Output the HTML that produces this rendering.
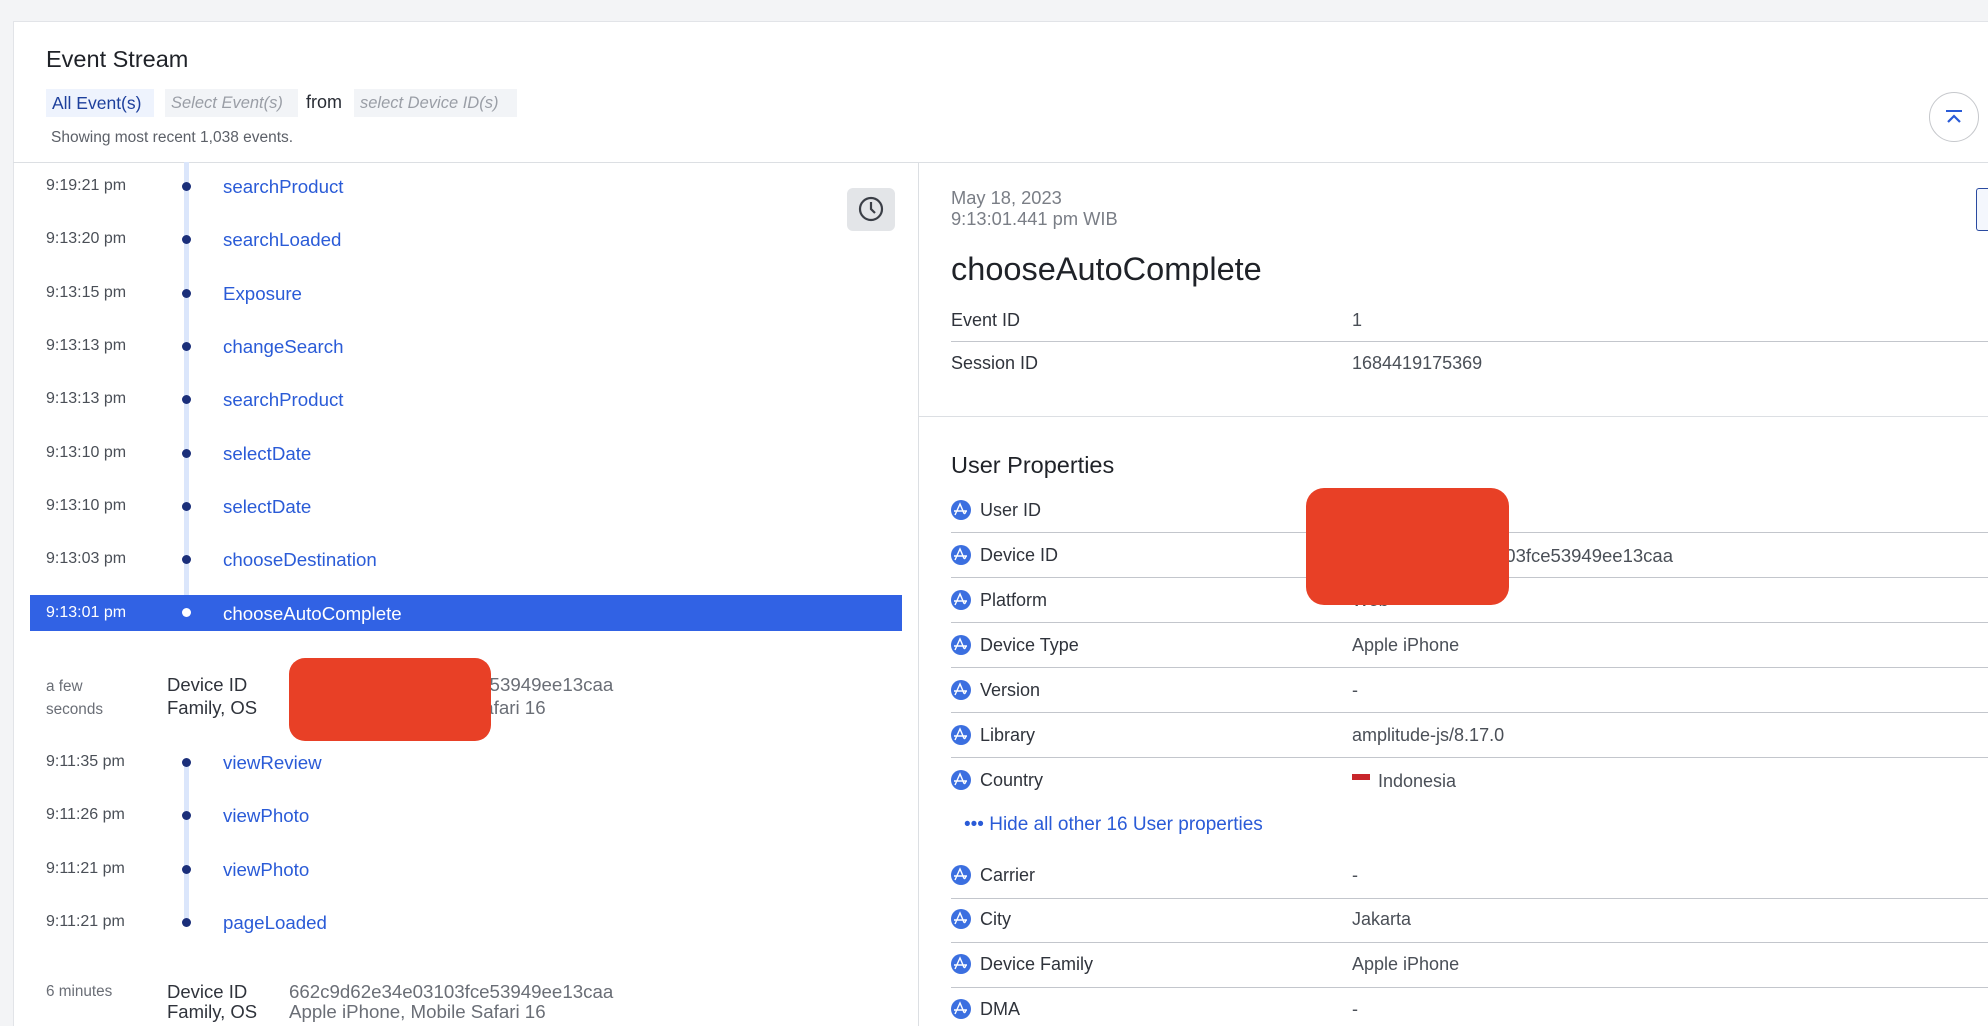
<!DOCTYPE html>
<html><head><meta charset="utf-8"><style>
*{margin:0;padding:0;box-sizing:border-box}
html,body{width:1988px;height:1026px;overflow:hidden}
body{background:#f3f4f6;font-family:"Liberation Sans",sans-serif;position:relative;color:#282c34}
.card{position:absolute;left:13px;top:21px;width:1975px;height:1005px;background:#fff;border:1px solid #e2e4e8;border-bottom:none;border-right:none}
.a{position:absolute;white-space:nowrap}
.t{position:absolute;left:46px;font-size:16px;color:#4a4f57}
.dot{position:absolute;left:182px;width:9px;height:9px;border-radius:50%;background:#1b2f7a}
.ev{position:absolute;left:223px;font-size:18.7px;color:#2a5bd7}
.lbl{position:absolute;left:980px;font-size:18px;color:#2f333b}
.val{position:absolute;left:1352px;font-size:18px;color:#4a4f57}
.ic{position:absolute;left:951px;width:20px;height:20px}
.ln{position:absolute;left:951px;width:1037px;height:1px;background:#c3c6cc}
</style></head><body>
<svg width="0" height="0" style="position:absolute"><defs><symbol id="amp" viewBox="0 0 20 20"><circle cx="10" cy="10" r="10" fill="#3b6fe0"/><path d="M4 15 L9 4 L12 11 M3 11 H16 M12 11 Q13.5 16 15 11" stroke="#fff" stroke-width="1.4" fill="none"/></symbol></defs></svg>
<div class="card"></div>
<div class="a" style="left:46px;top:46px;font-size:23.5px;color:#1f2228">Event Stream</div>
<div class="a" style="left:46px;top:89px;height:28px;width:108px;background:#eef3fd;color:#1d3f9c;font-size:17.5px;padding:4px 6px">All Event(s)</div>
<div class="a" style="left:165px;top:89px;height:28px;width:133px;background:#f2f4f7;color:#9a9ea6;font-size:16.5px;font-style:italic;padding:5px 6px">Select Event(s)</div>
<div class="a" style="left:306px;top:92px;font-size:18px;color:#282c34">from</div>
<div class="a" style="left:354px;top:89px;height:28px;width:163px;background:#f2f4f7;color:#9a9ea6;font-size:16.5px;font-style:italic;padding:5px 6px">select Device ID(s)</div>
<div class="a" style="left:51px;top:129px;font-size:15.5px;color:#5c6068">Showing most recent 1,038 events.</div>
<div class="a" style="left:13px;top:162px;width:1975px;height:1px;background:#dcdfe3"></div>
<div class="a" style="left:918px;top:162px;width:1px;height:864px;background:#dcdfe3"></div>
<div class="a" style="left:1929px;top:92px;width:50px;height:50px;border-radius:50%;border:1px solid #c6c8cc"></div>
<div class="a" style="left:1946px;top:110px;width:16px;height:2px;background:#2a5bd7"></div>
<svg class="a" style="left:1946px;top:114px" width="16" height="10"><path d="M2 8 L8 2 L14 8" stroke="#2a5bd7" stroke-width="2.2" fill="none"/></svg>
<div class="a" style="left:1976px;top:188px;width:12px;height:43px;border:1.5px solid #2a4aa0;border-right:none;border-radius:3px 0 0 3px;background:#f4f7fd"></div>

<div class="a" style="left:184px;top:162px;width:5px;height:455px;background:#dbe6fb"></div>
<div class="a" style="left:30px;top:595px;width:872px;height:36px;background:#3162e4"></div>
<div class="a" style="left:847px;top:188px;width:48px;height:43px;border-radius:6px;background:#e3e5e8"></div>
<svg class="a" style="left:857px;top:195px" width="28" height="28"><circle cx="14" cy="14" r="11" stroke="#3b3f47" stroke-width="2.2" fill="none"/><path d="M14 7 V14 L18 18" stroke="#3b3f47" stroke-width="2.2" fill="none"/></svg>

<div class="t" style="top:177px">9:19:21 pm</div><div class="dot" style="top:182px"></div><div class="ev" style="top:176px">searchProduct</div>
<div class="t" style="top:230px">9:13:20 pm</div><div class="dot" style="top:235px"></div><div class="ev" style="top:229px">searchLoaded</div>
<div class="t" style="top:284px">9:13:15 pm</div><div class="dot" style="top:289px"></div><div class="ev" style="top:283px">Exposure</div>
<div class="t" style="top:337px">9:13:13 pm</div><div class="dot" style="top:342px"></div><div class="ev" style="top:336px">changeSearch</div>
<div class="t" style="top:390px">9:13:13 pm</div><div class="dot" style="top:395px"></div><div class="ev" style="top:389px">searchProduct</div>
<div class="t" style="top:444px">9:13:10 pm</div><div class="dot" style="top:449px"></div><div class="ev" style="top:443px">selectDate</div>
<div class="t" style="top:497px">9:13:10 pm</div><div class="dot" style="top:502px"></div><div class="ev" style="top:496px">selectDate</div>
<div class="t" style="top:550px">9:13:03 pm</div><div class="dot" style="top:555px"></div><div class="ev" style="top:549px">chooseDestination</div>
<div class="t" style="top:604px;color:#fff">9:13:01 pm</div><div class="dot" style="top:608px;background:#fff"></div><div class="ev" style="top:603px;color:#fff">chooseAutoComplete</div>

<div class="a" style="left:46px;top:675px;font-size:15.3px;color:#6a6e76;line-height:23px">a few<br>seconds</div>
<div class="a" style="left:167px;top:673px;font-size:18.5px;color:#2f333b;line-height:23px">Device ID<br>Family, OS</div>
<div class="a" style="left:289px;top:673px;font-size:18.7px;color:#6a6e76;line-height:23px">662c9d62e34e03103fce53949ee13caa<br>Apple iPhone, Mobile Safari 16</div>
<div class="a" style="left:289px;top:658px;width:202px;height:83px;border-radius:16px;background:#e84026"></div>

<div class="a" style="left:184px;top:762px;width:5px;height:160px;background:#dbe6fb"></div>
<div class="t" style="top:753px">9:11:35 pm</div><div class="dot" style="top:758px"></div><div class="ev" style="top:752px">viewReview</div>
<div class="t" style="top:806px">9:11:26 pm</div><div class="dot" style="top:811px"></div><div class="ev" style="top:805px">viewPhoto</div>
<div class="t" style="top:860px">9:11:21 pm</div><div class="dot" style="top:865px"></div><div class="ev" style="top:859px">viewPhoto</div>
<div class="t" style="top:913px">9:11:21 pm</div><div class="dot" style="top:918px"></div><div class="ev" style="top:912px">pageLoaded</div>

<div class="a" style="left:46px;top:983px;font-size:15.3px;color:#6a6e76">6 minutes</div>
<div class="a" style="left:167px;top:982px;font-size:18.5px;color:#2f333b;line-height:20px">Device ID<br>Family, OS</div>
<div class="a" style="left:289px;top:982px;font-size:18.7px;color:#6a6e76;line-height:20px">662c9d62e34e03103fce53949ee13caa<br>Apple iPhone, Mobile Safari 16</div>

<div class="a" style="left:951px;top:187px;font-size:18.3px;color:#7a7e86;line-height:21px">May 18, 2023<br>9:13:01.441 pm WIB</div>
<div class="a" style="left:951px;top:251px;font-size:32.5px;color:#1f2228">chooseAutoComplete</div>
<div class="lbl" style="left:951px;top:310px">Event ID</div><div class="val" style="top:310px">1</div>
<div class="ln" style="top:341px"></div>
<div class="lbl" style="left:951px;top:353px">Session ID</div><div class="val" style="top:353px">1684419175369</div>
<div class="a" style="left:918px;top:416px;width:1070px;height:1px;background:#dcdfe3"></div>
<div class="a" style="left:951px;top:452px;font-size:23.5px;color:#1f2228">User Properties</div>

<svg class="ic" style="top:500px"><use href="#amp"/></svg><div class="lbl" style="top:500px">User ID</div>
<div class="ln" style="top:532px"></div>
<svg class="ic" style="top:545px"><use href="#amp"/></svg><div class="lbl" style="top:545px">Device ID</div><div class="val" style="top:545px;font-size:18.5px">662c9d62e34e03103fce53949ee13caa</div>
<div class="ln" style="top:577px"></div>
<svg class="ic" style="top:590px"><use href="#amp"/></svg><div class="lbl" style="top:590px">Platform</div><div class="val" style="top:590px">Web</div>
<div class="ln" style="top:622px"></div>
<svg class="ic" style="top:635px"><use href="#amp"/></svg><div class="lbl" style="top:635px">Device Type</div><div class="val" style="top:635px">Apple iPhone</div>
<div class="ln" style="top:667px"></div>
<svg class="ic" style="top:680px"><use href="#amp"/></svg><div class="lbl" style="top:680px">Version</div><div class="val" style="top:680px">-</div>
<div class="ln" style="top:712px"></div>
<svg class="ic" style="top:725px"><use href="#amp"/></svg><div class="lbl" style="top:725px">Library</div><div class="val" style="top:725px">amplitude-js/8.17.0</div>
<div class="ln" style="top:757px"></div>
<svg class="ic" style="top:770px"><use href="#amp"/></svg><div class="lbl" style="top:770px">Country</div>
<div class="a" style="left:1352px;top:774px;width:18px;height:6px;background:#c8262b"></div>
<div class="val" style="left:1378px;top:771px">Indonesia</div>
<div class="a" style="left:964px;top:814px;font-size:19px;color:#2a5bd7">••• Hide all other 16 User properties</div>
<div class="a" style="left:1306px;top:488px;width:203px;height:117px;border-radius:18px;background:#e84026"></div>

<svg class="ic" style="top:865px"><use href="#amp"/></svg><div class="lbl" style="top:865px">Carrier</div><div class="val" style="top:865px">-</div>
<div class="ln" style="top:898px"></div>
<svg class="ic" style="top:909px"><use href="#amp"/></svg><div class="lbl" style="top:909px">City</div><div class="val" style="top:909px">Jakarta</div>
<div class="ln" style="top:942px"></div>
<svg class="ic" style="top:954px"><use href="#amp"/></svg><div class="lbl" style="top:954px">Device Family</div><div class="val" style="top:954px">Apple iPhone</div>
<div class="ln" style="top:987px"></div>
<svg class="ic" style="top:999px"><use href="#amp"/></svg><div class="lbl" style="top:999px">DMA</div><div class="val" style="top:999px">-</div>
</body></html>
